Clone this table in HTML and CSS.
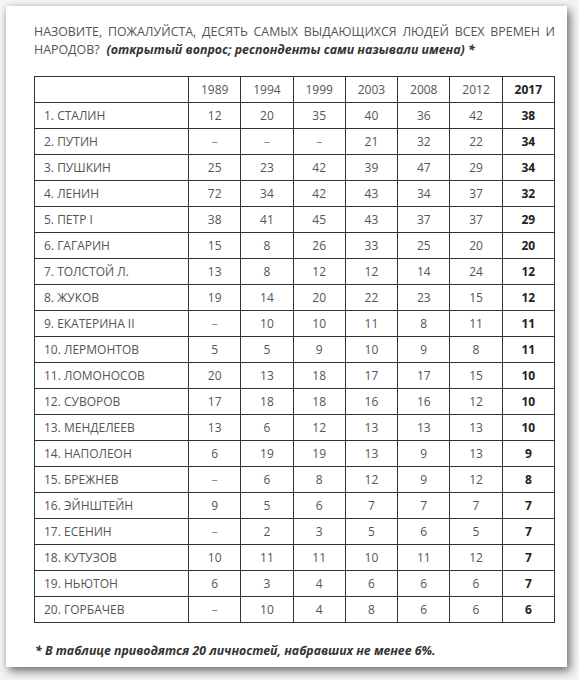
FILE: index.html
```html
<!DOCTYPE html>
<html lang="ru">
<head>
<meta charset="utf-8">
<link rel="stylesheet" href="styles.css">
</head>
<body>
<div class="card">
  <div class="question">
    <div class="q-line1">НАЗОВИТЕ, ПОЖАЛУЙСТА, ДЕСЯТЬ САМЫХ ВЫДАЮЩИХСЯ ЛЮДЕЙ ВСЕХ ВРЕМЕН И</div>
    <div class="q-line2"><span>НАРОДОВ?</span> <b class="note">(открытый вопрос; респонденты сами называли имена) *</b></div>
  </div>
  <table class="data">
    <colgroup><col class="c-name"><col><col><col><col><col><col><col></colgroup>
    <tr><td></td><td>1989</td><td>1994</td><td>1999</td><td>2003</td><td>2008</td><td>2012</td><td class="last">2017</td></tr>
    <tr><td class="name">1. СТАЛИН</td><td>12</td><td>20</td><td>35</td><td>40</td><td>36</td><td>42</td><td class="last">38</td></tr>
    <tr><td class="name">2. ПУТИН</td><td class="dash">–</td><td class="dash">–</td><td class="dash">–</td><td>21</td><td>32</td><td>22</td><td class="last">34</td></tr>
    <tr><td class="name">3. ПУШКИН</td><td>25</td><td>23</td><td>42</td><td>39</td><td>47</td><td>29</td><td class="last">34</td></tr>
    <tr><td class="name">4. ЛЕНИН</td><td>72</td><td>34</td><td>42</td><td>43</td><td>34</td><td>37</td><td class="last">32</td></tr>
    <tr><td class="name">5. ПЕТР I</td><td>38</td><td>41</td><td>45</td><td>43</td><td>37</td><td>37</td><td class="last">29</td></tr>
    <tr><td class="name">6. ГАГАРИН</td><td>15</td><td>8</td><td>26</td><td>33</td><td>25</td><td>20</td><td class="last">20</td></tr>
    <tr><td class="name">7. ТОЛСТОЙ Л.</td><td>13</td><td>8</td><td>12</td><td>12</td><td>14</td><td>24</td><td class="last">12</td></tr>
    <tr><td class="name">8. ЖУКОВ</td><td>19</td><td>14</td><td>20</td><td>22</td><td>23</td><td>15</td><td class="last">12</td></tr>
    <tr><td class="name">9. ЕКАТЕРИНА II</td><td class="dash">–</td><td>10</td><td>10</td><td>11</td><td>8</td><td>11</td><td class="last">11</td></tr>
    <tr><td class="name">10. ЛЕРМОНТОВ</td><td>5</td><td>5</td><td>9</td><td>10</td><td>9</td><td>8</td><td class="last">11</td></tr>
    <tr><td class="name">11. ЛОМОНОСОВ</td><td>20</td><td>13</td><td>18</td><td>17</td><td>17</td><td>15</td><td class="last">10</td></tr>
    <tr><td class="name">12. СУВОРОВ</td><td>17</td><td>18</td><td>18</td><td>16</td><td>16</td><td>12</td><td class="last">10</td></tr>
    <tr><td class="name">13. МЕНДЕЛЕЕВ</td><td>13</td><td>6</td><td>12</td><td>13</td><td>13</td><td>13</td><td class="last">10</td></tr>
    <tr><td class="name">14. НАПОЛЕОН</td><td>6</td><td>19</td><td>19</td><td>13</td><td>9</td><td>13</td><td class="last">9</td></tr>
    <tr><td class="name">15. БРЕЖНЕВ</td><td class="dash">–</td><td>6</td><td>8</td><td>12</td><td>9</td><td>12</td><td class="last">8</td></tr>
    <tr><td class="name">16. ЭЙНШТЕЙН</td><td>9</td><td>5</td><td>6</td><td>7</td><td>7</td><td>7</td><td class="last">7</td></tr>
    <tr><td class="name">17. ЕСЕНИН</td><td class="dash">–</td><td>2</td><td>3</td><td>5</td><td>6</td><td>5</td><td class="last">7</td></tr>
    <tr><td class="name">18. КУТУЗОВ</td><td>10</td><td>11</td><td>11</td><td>10</td><td>11</td><td>12</td><td class="last">7</td></tr>
    <tr><td class="name">19. НЬЮТОН</td><td>6</td><td>3</td><td>4</td><td>6</td><td>6</td><td>6</td><td class="last">7</td></tr>
    <tr><td class="name">20. ГОРБАЧЕВ</td><td class="dash">–</td><td>10</td><td>4</td><td>8</td><td>6</td><td>6</td><td class="last">6</td></tr>
  </table>
  <p class="footnote">* В таблице приводятся 20 личностей, набравших не менее 6%.</p>
</div>
</body>
</html>
```
FILE: styles.css
```css
html, body {
  margin: 0;
  padding: 0;
}
body {
  background: #f4f4f4;
  font-family: "Open Sans", "Noto Sans", sans-serif;
  width: 579px;
  height: 680px;
  overflow: hidden;
}
.card {
  box-sizing: border-box;
  width: 561px;
  height: 661px;
  margin: 6px 0 0 6px;
  background: #fff;
  padding: 17px 12px 0 28px;
  box-shadow: 3px 4px 9px rgba(0, 0, 0, 0.55), -1px 0 4px rgba(0, 0, 0, 0.08);
}
.question {
  width: 521px;
  font-size: 12.4px;
  line-height: 18px;
  color: #555;
}
.q-line1 {
  text-align: justify;
  text-align-last: justify;
}
.q-line2 {
  display: flex;
  gap: 7px;
}
.note {
  font-weight: 700;
  font-style: italic;
  color: #333;
}
.data {
  margin-top: 17px;
  border-collapse: collapse;
  width: 521px;
  table-layout: fixed;
  font-size: 12px;
  color: #555;
}
.c-name {
  width: 154px;
}
.data td {
  border: 1px solid #333;
  height: 25px;
  padding: 0;
  text-align: center;
  vertical-align: middle;
  line-height: 18px;
}
.data td.name {
  text-align: left;
  padding-left: 9px;
}
.data td.last {
  font-weight: 700;
  color: #222;
}
.data td.dash {
  color: #888;
}
.footnote {
  margin: 19px 0 0 1px;
  font-size: 12.3px;
  font-weight: 700;
  font-style: italic;
  color: #333;
  line-height: 18px;
}
```
